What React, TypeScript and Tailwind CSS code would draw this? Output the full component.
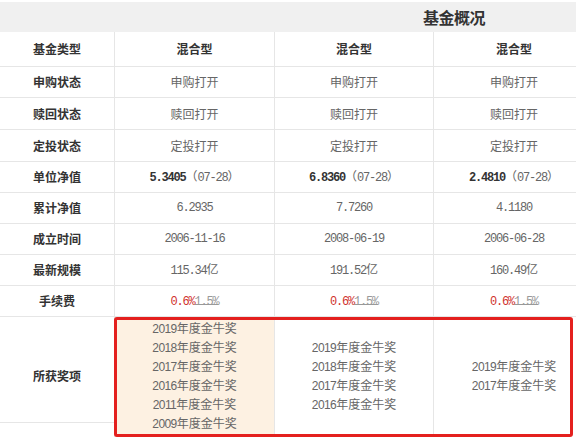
import React from "react";

const CJK = '"Noto Sans CJK SC", "Liberation Sans", sans-serif';

const Num = ({ children, bold }: { children: React.ReactNode; bold?: boolean }) => (
  <span
    className={bold ? "font-bold text-[#333]" : ""}
    style={{ fontFamily: '"Liberation Mono", "Noto Sans CJK SC", monospace', letterSpacing: "-1.2px" }}
  >
    {children}
  </span>
);

type Row = { label: string; h: string; cells: React.ReactNode[]; strong?: boolean };

const fee = (
  <span>
    <span className="text-[#d0312d]"><Num>0.6%</Num></span>
    <span className="text-[#999] line-through"><Num>1.5%</Num></span>
  </span>
);

const rows: Row[] = [
  { label: "基金类型", h: "h-[35px]", cells: ["混合型", "混合型", "混合型"], strong: true },
  { label: "申购状态", h: "h-[31px]", cells: ["申购打开", "申购打开", "申购打开"] },
  { label: "赎回状态", h: "h-[32px]", cells: ["赎回打开", "赎回打开", "赎回打开"] },
  { label: "定投状态", h: "h-[32px]", cells: ["定投打开", "定投打开", "定投打开"] },
  {
    label: "单位净值",
    h: "h-[31px]",
    cells: [
      <span><Num bold>5.3405</Num>（<Num>07-28</Num>）</span>,
      <span><Num bold>6.8360</Num>（<Num>07-28</Num>）</span>,
      <span><Num bold>2.4810</Num>（<Num>07-28</Num>）</span>,
    ],
  },
  { label: "累计净值", h: "h-[31px]", cells: [<Num>6.2935</Num>, <Num>7.7260</Num>, <Num>4.1180</Num>] },
  { label: "成立时间", h: "h-[31px]", cells: [<Num>2006-11-16</Num>, <Num>2008-06-19</Num>, <Num>2006-06-28</Num>] },
  {
    label: "最新规模",
    h: "h-[31px]",
    cells: [
      <span><Num>115.34</Num>亿</span>,
      <span><Num>191.52</Num>亿</span>,
      <span><Num>160.49</Num>亿</span>,
    ],
  },
  { label: "手续费", h: "h-[31px]", cells: [fee, fee, fee] },
];

const widths = ["w-[115px] border-r", "w-[160px] border-r", "w-[159px] border-r", "w-[160px]"];

const Award = ({ items }: { items: string[] }) => (
  <div className="flex flex-col items-center">
    {items.map((t) => (
      <div key={t} className="h-[19px] leading-[19px]">
        <span style={{ fontFamily: '"Liberation Sans", sans-serif', letterSpacing: "-0.6px" }}>{t.slice(0, 4)}</span>
        {t.slice(4)}
      </div>
    ))}
  </div>
);

export default function App() {
  return (
    <div
      className="relative w-[576px] h-[437px] overflow-hidden bg-white text-[12px] text-[#666]"
      style={{ fontFamily: CJK }}
    >
      <div className="h-[2px]" />
      <div className="h-[30px] bg-[#f0f0f0] flex items-center pl-[423px]">
        <span className="text-[16px] font-bold text-[#333] tracking-[-0.5px]">基金概况</span>
      </div>
      <div className="w-[594px]">
        {rows.map((r) => (
          <div key={r.label} className={`flex border-b border-[#e6e6e6] ${r.h}`}>
            <div className={`${widths[0]} border-[#e6e6e6] flex items-center justify-center font-bold text-[#333]`}>
              {r.label}
            </div>
            {r.cells.map((c, i) => (
              <div
                key={i}
                className={`${widths[i + 1]} border-[#e6e6e6] flex items-center justify-center ${r.strong ? "font-bold text-[#333]" : ""}`}
              >
                {c}
              </div>
            ))}
          </div>
        ))}
        <div className="flex h-[120px]">
          <div className="w-[115px] border-r border-[#e6e6e6] flex flex-col">
            <div className="h-[106px] border-b border-[#e6e6e6] flex items-center justify-center pt-[12px] font-bold text-[#333]">
              所获奖项
            </div>
          </div>
          <div className="w-[160px] border-r border-[#e6e6e6] bg-[#fdf1e2] flex items-start justify-center pt-[1px]">
            <Award items={["2019年度金牛奖", "2018年度金牛奖", "2017年度金牛奖", "2016年度金牛奖", "2011年度金牛奖", "2009年度金牛奖"]} />
          </div>
          <div className="w-[159px] border-r border-[#e6e6e6] flex items-start justify-center pt-[20px]">
            <Award items={["2019年度金牛奖", "2018年度金牛奖", "2017年度金牛奖", "2016年度金牛奖"]} />
          </div>
          <div className="w-[160px] flex items-start justify-center pt-[39px]">
            <Award items={["2019年度金牛奖", "2017年度金牛奖"]} />
          </div>
        </div>
      </div>
      <div className="absolute left-[114px] top-[317px] w-[459px] h-[120px] border-[3px] border-[#e4201e] rounded-[3px]" />
    </div>
  );
}
